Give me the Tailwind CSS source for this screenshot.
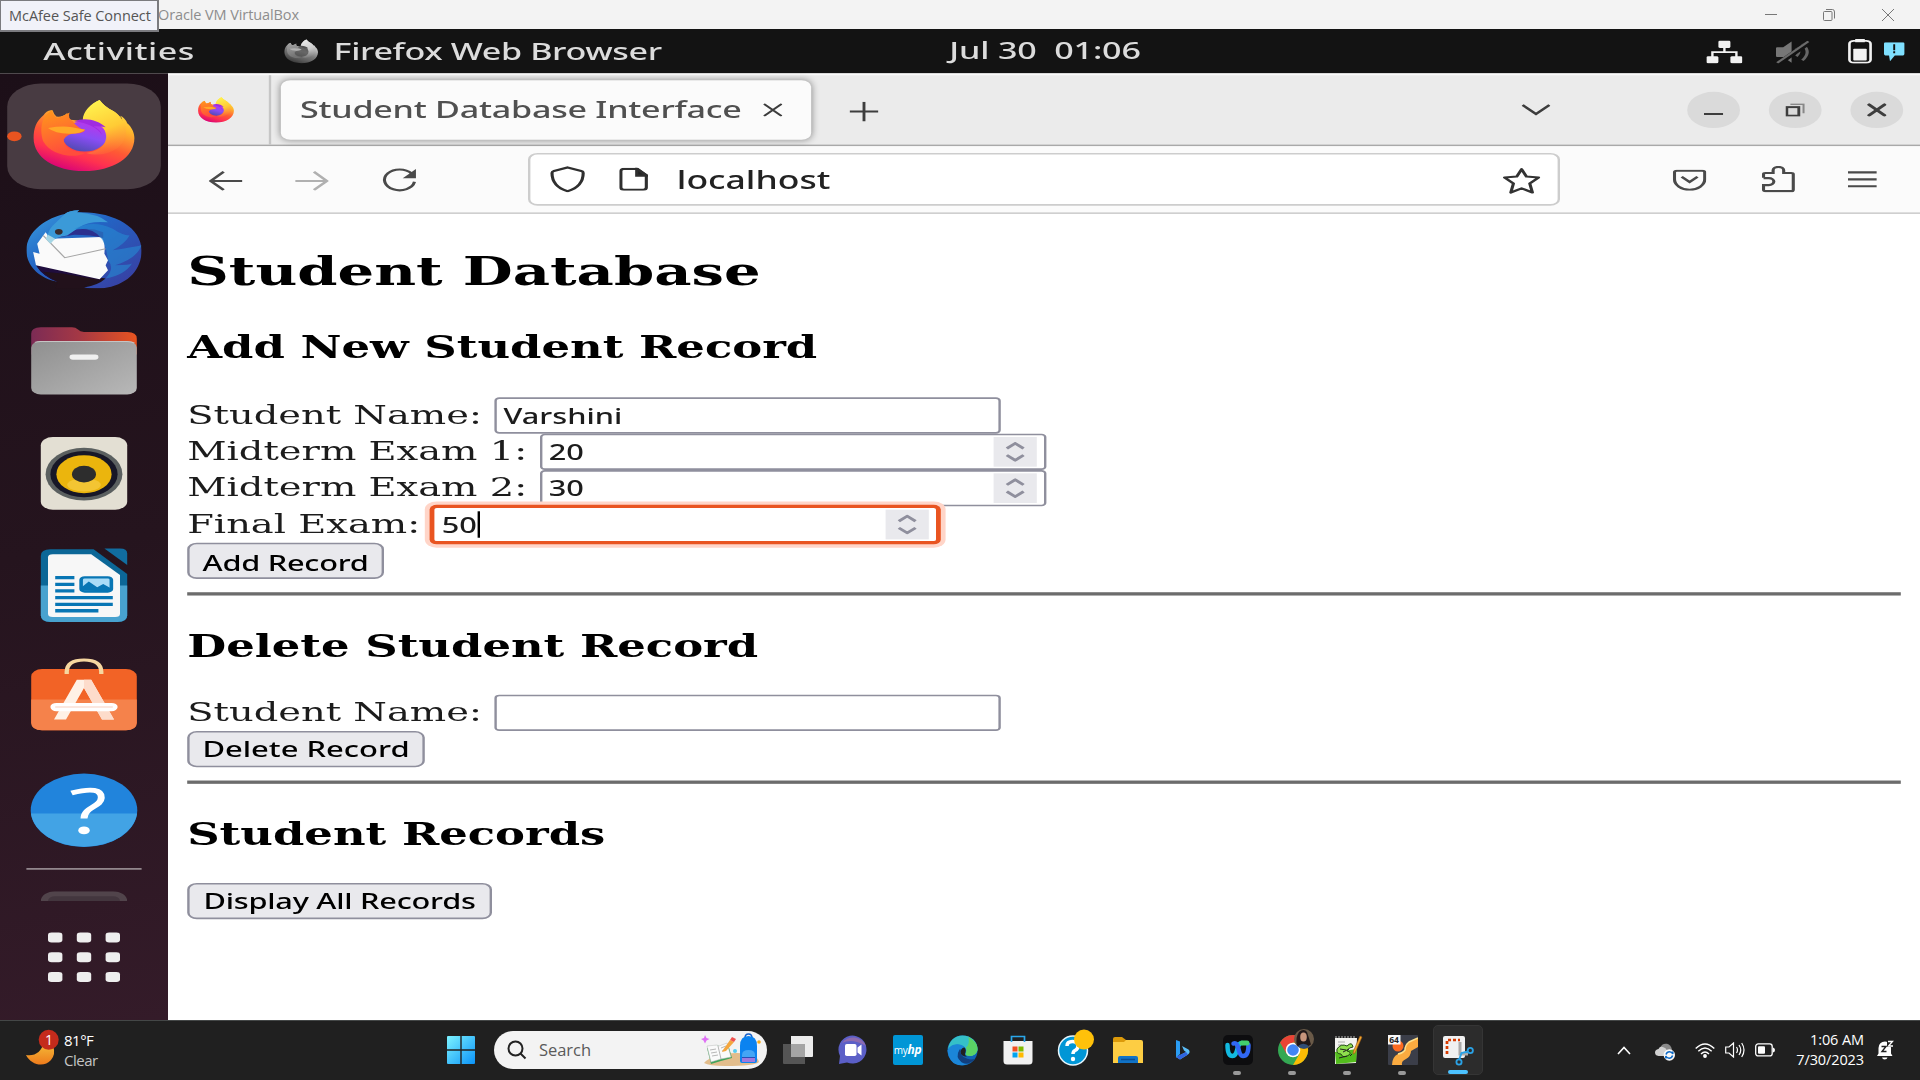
<!DOCTYPE html>
<html lang="en">
<head>
<meta charset="utf-8">
<title>Oracle VM VirtualBox</title>
<script src="https://cdn.jsdelivr.net/npm/@tailwindcss/browser@4"></script>
</head>
<body class="flex h-[1080px] w-[1920px] flex-col overflow-hidden bg-[#202020]">

<!-- gradients and the shared Firefox symbol -->
<svg class="absolute size-0" aria-hidden="true">
  <defs>
    <linearGradient id="ffBody" x1=".75" y1="0" x2=".3" y2="1"><stop offset="0" stop-color="#fff14b"/><stop offset=".3" stop-color="#ffb62d"/><stop offset=".58" stop-color="#ff5a34"/><stop offset=".78" stop-color="#ff3150"/><stop offset="1" stop-color="#d6007a"/></linearGradient>
    <linearGradient id="ffTail" x1=".3" y1="0" x2=".6" y2="1"><stop offset="0" stop-color="#fff44f"/><stop offset=".55" stop-color="#ffcb35"/><stop offset="1" stop-color="#ff7a36" stop-opacity=".2"/></linearGradient>
    <linearGradient id="ffHead" x1="0" y1="0" x2=".3" y2="1"><stop offset="0" stop-color="#ff9a1a"/><stop offset="1" stop-color="#ff4d3c"/></linearGradient>
    <linearGradient id="ffGlobe" x1=".7" y1="0" x2=".3" y2="1"><stop offset="0" stop-color="#bf33e8"/><stop offset=".5" stop-color="#8a4df5"/><stop offset="1" stop-color="#4e4aaf"/></linearGradient>
    <linearGradient id="tb" x1="0" y1="0" x2="1" y2="1"><stop offset="0" stop-color="#3aa0e0"/><stop offset=".4" stop-color="#2364c4"/><stop offset="1" stop-color="#3b3a9e"/></linearGradient>
    <linearGradient id="folderBack" x1="0" y1="0" x2="1" y2="0"><stop offset="0" stop-color="#7c2b55"/><stop offset=".45" stop-color="#a43845"/><stop offset="1" stop-color="#e95420"/></linearGradient>
    <linearGradient id="folderFront" x1="0" y1="0" x2="1" y2="1"><stop offset="0" stop-color="#8f8f8f"/><stop offset="1" stop-color="#b8b8b8"/></linearGradient>
    <linearGradient id="win" x1="0" y1="0" x2="1" y2="1"><stop offset="0" stop-color="#7df3ff"/><stop offset="1" stop-color="#0b93f8"/></linearGradient>
    <linearGradient id="moon" x1="0" y1="0" x2="0" y2="1"><stop offset="0" stop-color="#f5c03a"/><stop offset="1" stop-color="#ee7b1c"/></linearGradient>
  </defs>
  <symbol id="firefox" viewBox="0 0 48 48">
    <path d="M7.2 11C8 9.400 9.500 7.500 11 8.500Q11.500 11 12.500 12Q15 12.500 17 9.800Q17 12.500 18.500 14L25 15C24 10 27 4 30.500 2Q32.500 6 36 8.500C38 10 39.500 13 40 15Q40 12.500 39 11.500Q41 12.500 42 16C44 18.500 45 22 45 25C45 37 36 45 24 45S3 37 3 25C3 19 4 15 7.200 11Z" fill="url(#ffBody)"/>
    <circle cx="24.300" cy="24" r="9.200" fill="url(#ffGlobe)"/>
    <path d="M23.500 14C23.500 9 27 4 30.500 2Q32.500 6 36 8.500C43 15 43 25 38 31C34 35 29 36 25 34C31 33 34 28 33 22C32.500 18 29 14.500 23.500 14Z" fill="url(#ffTail)"/>
    <path d="M20 15C24 12 30 14 33 18.500Q30 17.500 28 18Q31 20 31.500 23Q28 16 20 15Z" fill="#a02be0"/>
    <path d="M10.800 8Q11 11.500 12.800 13Q15 12 18 9.500Q17 13 19.500 15Q20 17 23 19.500Q25 19.800 24 21Q22 22.500 20 22.300Q17 22.500 15.500 26Q16 33 24.500 34C19 38 10 35 7 27C5.500 20 6 12 10.800 8Z" fill="url(#ffHead)"/>
    <path d="M9 19Q15 17.500 19 18.500L24.500 20Q22.500 22.500 18 22.400Q12 22.500 9 19Z" fill="#ffa928"/>
  </symbol>
</svg>

<!-- host window title bar -->
<header class="relative z-10 flex h-[29px] shrink-0 items-start bg-[#f3f3f3] font-['Open_Sans',sans-serif]">
  <div class="flex h-[32px] w-[159px] shrink-0 items-center border-2 border-t border-l border-[#7b7b7f] bg-[#f1f2f9] pt-px pl-2 text-[14.500px] tracking-[-0.05px] whitespace-nowrap text-[#555]"><span>McAfee Safe Connect</span></div>
  <div class="ml-[-1px] text-[14.500px] leading-[29px] tracking-[-0.1px] whitespace-nowrap text-[#8d8d8d]">Oracle VM VirtualBox</div>
  <div class="ml-auto flex h-[29px] items-center pr-[25px] text-[#777]">
    <svg class="h-4 w-[14px]" viewBox="0 0 14 16" fill="none" stroke="currentColor"><path d="M1 7.500H13"/></svg>
    <svg class="ml-11 h-4 w-[14px]" viewBox="0 0 14 16" fill="none" stroke="currentColor"><rect x="1.500" y="4.500" width="8.500" height="9" rx="1"/><path d="M4 2.500H10.500Q12.500 2.500 12.500 5V11.500"/></svg>
    <svg class="ml-[45px] h-4 w-[14px]" viewBox="0 0 14 16" stroke="currentColor"><path d="M1 2L13 14M13 2L1 14"/></svg>
  </div>
</header>

<!-- guest display: 800x600 stretched to fill the window -->
<main class="h-[991px] w-[1920px] shrink-0 overflow-hidden">
<div class="flex h-[600px] w-[800px] origin-top-left scale-x-[2.4] scale-y-[1.6517] flex-col bg-white">

  <!-- GNOME panel -->
  <div class="flex h-[27px] shrink-0 items-center bg-[#131313] pr-[6px] pl-[18px] font-['Noto_Sans',sans-serif] text-[14.200px] font-medium text-[#dcdcdc]">
    <div class="w-[99.500px] tracking-[0.2px] whitespace-nowrap">Activities</div>
    <svg class="size-[15px] grayscale" viewBox="2 1 44 45"><use href="#firefox" width="48" height="48"/></svg>
    <div class="ml-[6.500px] w-[256.500px] tracking-[-0.15px] whitespace-nowrap">Firefox Web Browser</div>
    <div class="w-[315.500px] pb-px tracking-[-0.05px] whitespace-pre">Jul 30  01:06</div>
    <svg class="h-[14px] w-[15px] shrink-0" viewBox="0 0 15 14" fill="#f2f2f2"><rect x="5" width="5" height="4.500" rx=".8"/><rect y="9.500" width="5" height="4.300" rx=".8"/><rect x="10" y="9.500" width="5" height="4.300" rx=".8"/><path d="M2.500 10V7H12.500V10M7.500 4V7" fill="none" stroke="#f2f2f2"/></svg>
    <svg class="ml-[14px] h-[14px] w-[14px] shrink-0" viewBox="0 0 14 14" fill="#777"><path d="M0 4.500Q0 4 .5 4H3L6.500 .5V13.500L3 10H.5Q0 10 0 9.500Z"/><path d="M8.500 4.500Q10.500 7 8.500 9.500M11 2Q15 7 11 12" fill="none" stroke="#666" stroke-width="1.300"/><path d="M.5 14.500L14 .8" stroke="#131313" stroke-width="2.600"/><path d="M.5 13.500L13.500 .5" stroke="#6b6b6b" stroke-width="1.200"/></svg>
    <svg class="mb-px ml-4 h-[15px] w-[10px] shrink-0" viewBox="0 0 10 15"><rect x="3" width="4" height="2" fill="#f2f2f2"/><rect x=".6" y="1.200" width="8.800" height="13.200" rx="1.800" fill="none" stroke="#f2f2f2" stroke-width="1.100"/><rect x="2.200" y="6" width="5.600" height="7" rx=".4" fill="#f2f2f2"/></svg>
    <svg class="mt-px mr-[.5px] ml-auto h-[12px] w-[8.500px] shrink-0" viewBox="0 0 8.500 12"><path d="M.6 0H7.900Q8.500 0 8.500 .8V7Q8.500 8 7.900 8H4.500L2.500 11.500L2.100 8H.6Q0 8 0 7V.8Q0 0 .6 0Z" fill="#7fe0ff"/><path d="M4.250 1.300V4.800M4.250 5.500V6.700" stroke="#111" stroke-width=".8"/></svg>
  </div>

  <div class="flex min-h-0 flex-1">
    <!-- dock -->
    <nav class="flex w-[70px] shrink-0 flex-col items-center gap-1 bg-linear-165 from-[#1c0f18] via-[#25141e] to-[#341b29] pt-[6px]">
      <div class="relative flex size-16 items-center justify-center rounded-[14px] bg-[#483b42]">
        <span class="absolute top-[29px] left-0 size-[6px] rounded-full bg-[#e95420]"></span>
        <svg class="size-12"><use href="#firefox"/></svg>
      </div>
      <div class="flex size-16 items-center justify-center">
        <svg class="size-12" viewBox="0 0 48 48"><path d="M0 25C0 13 9 5 16 3Q18 .8 22 .8L21 2C36 1 48 11 48 25C48 37 42 46 32 48Q27 48.500 24 47.500Q30 46 33 42L4 34Q7 41 13 44C5 42 0 34 0 25Z" fill="url(#tb)"/><path d="M4 34L14 36L32 42Q26 46 13 44Q7 41 4 34Z" fill="#1f0d3d"/><path d="M13 44Q9 41 7 38L15 39L31 43Q24 45 24 47.500L24 49H12Z" fill="#22111b"/><path d="M2.800 26L5.500 27L4.500 21L8 14L10 18L31 17Q33 19 32.500 27L34 31L33 34L34 37L30.500 42.500L4 34Z" fill="#fafafa"/><path d="M7 16L16 29.500L33 24" fill="none" stroke="#a6a6a6" stroke-width=".6"/><path d="M17 14Q25 10 32 14L32 17.500Q27 15.500 20 15.500L10 18Z" fill="#2c2f8e"/><path d="M16 3Q18 .8 22 .8L21 2Q30 3 34 8Q26 7 22 11L17 16Q12 17 10 20L8.500 18Q9 13 11 10Z" fill="#3b9ad8"/><path d="M20 12Q28 6 36 12Q40 16 43 16Q41 21 36 25Q45 23 48 22Q46 30 37 34Q43 34 44 33Q41 40 33 42Q37 36 34 31Q33 20 31 17.500Q28 11 20 12Z" fill="#268bd2" opacity=".6"/><ellipse cx="13.500" cy="13.800" rx="1.600" ry="1.700" fill="#392d2e"/><path d="M9 15.500L8 18L10 21L12 18Z" fill="#a5d6e5"/></svg>
      </div>
      <div class="flex size-16 items-center justify-center">
        <svg class="size-12" viewBox="0 0 48 48"><path d="M2 12V7.500Q2 3.500 6 3.500H19Q20.500 3.500 21.500 5Q22.300 6.500 24 6.500H42Q46 6.500 46 10.500V20H2Z" fill="url(#folderBack)"/><rect x="2" y="12" width="44" height="32.300" rx="4" fill="url(#folderFront)"/><path d="M3.500 12.700Q4.500 12.200 6 12.200H42Q44 12.200 45 13.200" fill="none" stroke="#c5c5c5" stroke-width=".6"/><rect x="18" y="20" width="12" height="3.200" rx="1.400" fill="#f0f0f0"/></svg>
      </div>
      <div class="flex size-16 items-center justify-center">
        <svg class="size-12" viewBox="0 0 48 48"><rect x="6" y="2" width="36" height="44" rx="5" fill="#e3dfd3"/><circle cx="24" cy="24.500" r="16" fill="#5b6060"/><circle cx="24" cy="24.500" r="14" fill="#171727"/><circle cx="24" cy="24.500" r="11.500" fill="#ebb50d"/><ellipse cx="24" cy="31" rx="7" ry="4" fill="#fbd65a" opacity=".5"/><circle cx="24" cy="24.500" r="5" fill="#2d2d2d"/></svg>
      </div>
      <div class="flex size-16 items-center justify-center">
        <svg class="size-12" viewBox="0 0 48 48"><path d="M10 2H28L42 17V42Q42 46 38 46H10Q6 46 6 42V6Q6 2 10 2Z" fill="#0c6797"/><path d="M6 24H42V42Q42 46 38 46H10Q6 46 6 42Z" fill="#48a2cf"/><path d="M32.500 1.500H39Q42 1.500 42 4.500V11.500Z" fill="#116da0"/><path d="M11 5H27L39 17.500V41Q39 43 37 43H11Q9 43 9 41V7Q9 5 11 5Z" fill="#f7f7f7"/><path d="M12 19.200H20M12 23.200H20M12 27.200H20M12 31.300H36M12 35.300H36M12 39.200H30" stroke="#0876b4" stroke-width="2"/><rect x="22.800" y="19" width="12.600" height="8.500" rx="1.500" fill="#aadcf7" stroke="#0876b4" stroke-width="1.500"/><path d="M23 27V25L26 21.500L29.500 25L32 23L35 25.500V27.500Z" fill="#0876b4"/></svg>
      </div>
      <div class="flex size-16 items-center justify-center">
        <svg class="mt-[-1px] size-12 overflow-visible" viewBox="0 0 48 48"><rect x="2" y="6.500" width="44" height="37" rx="4.500" fill="#f26326"/><path d="M2 25H46V39Q46 43.500 41.500 43.500H6.500Q2 43.500 2 39Z" fill="#f5824b"/><path d="M16.800 9.500V8Q17 1 24 1T31.200 8V9.500" fill="none" stroke="#f6d7a0" stroke-width="1.800"/><path d="M21 13H27L36.500 37H31.500L24 18L16.500 37H11.500Z" fill="#fff1e6"/><path d="M24 13H27L36.500 37H31.500L24 18Z" fill="#fddccb"/><rect x="10" y="27" width="28" height="5" rx="2.500" fill="#fff"/><path d="M12 29.500H36" stroke="#f8cfc0" stroke-width=".7"/></svg>
      </div>
      <div class="flex size-16 items-center justify-center">
        <svg class="size-12" viewBox="0 0 48 48"><circle cx="24" cy="24" r="22.200" fill="#2184dc"/><path d="M1.900 26H46.100A22.200 22.200 0 0 1 1.900 26Z" fill="#42a3e5"/><path d="M18.800 13.500Q31.500 9 31.200 16.500C31 22 24 22 24 29" fill="none" stroke="#fff" stroke-width="2.900"/><circle cx="24" cy="36.200" r="2.400" fill="#fff"/></svg>
      </div>
      <div class="mt-[-1px] h-px w-12 bg-[#998f94]"></div>
      <div class="mt-[9px] h-[6px] w-9 overflow-hidden"><div class="h-5 rounded-t-[6px] border-[3px] border-[#51444b] bg-[#43363e]"></div></div>
      <div class="mt-[15px] grid grid-cols-3 gap-[6px]">
        <i class="h-[6px] w-[6px] rounded-[1.500px] bg-[#eee]"></i><i class="h-[6px] w-[6px] rounded-[1.500px] bg-[#eee]"></i><i class="h-[6px] w-[6px] rounded-[1.500px] bg-[#eee]"></i>
        <i class="h-[6px] w-[6px] rounded-[1.500px] bg-[#eee]"></i><i class="h-[6px] w-[6px] rounded-[1.500px] bg-[#eee]"></i><i class="h-[6px] w-[6px] rounded-[1.500px] bg-[#eee]"></i>
        <i class="h-[6px] w-[6px] rounded-[1.500px] bg-[#eee]"></i><i class="h-[6px] w-[6px] rounded-[1.500px] bg-[#eee]"></i><i class="h-[6px] w-[6px] rounded-[1.500px] bg-[#eee]"></i>
      </div>
    </nav>

    <!-- Firefox window -->
    <section class="flex min-w-0 flex-1 flex-col bg-white font-['Noto_Sans',sans-serif]">
      <div class="flex h-11 items-center border-t border-b border-t-[#fafafa] border-b-[#a9a9a9] bg-[#ebebeb] text-[#3d3d3d]">
        <div class="flex h-full w-[43px] items-center border-r border-[#c6c6c6] pl-3"><svg class="size-4" viewBox="2 1 44 45"><use href="#firefox" width="48" height="48"/></svg></div>
        <div class="ml-1 flex h-9 w-[221px] items-center justify-between rounded-[4px] bg-[#fbfbfb] pr-3 pl-2 shadow-[0_0_4px_rgba(0,0,0,0.4)]">
          <span class="text-[14.200px] font-medium tracking-[-0.1px] whitespace-nowrap text-[#505050]">Student Database Interface</span>
          <svg class="size-2" viewBox="0 0 8 8" stroke="currentColor"><path d="M.3 .3L7.700 7.700M7.700 .3L.3 7.700"/></svg>
        </div>
        <svg class="mt-px ml-[15.500px] size-3" viewBox="0 0 12 12" stroke="currentColor" stroke-width="1.200"><path d="M6 0V12M0 6H12"/></svg>
        <svg class="ml-[268.500px] h-2 w-3" viewBox="0 0 12 8" fill="none" stroke="currentColor" stroke-width="1.300"><path d="M.4 1L6 6.500L11.600 1"/></svg>
        <div class="ml-auto flex gap-3 pr-[7px]">
          <div class="flex size-[22px] items-center justify-center rounded-full bg-[#dadada]"><svg class="size-2" viewBox="0 0 8 8" stroke="currentColor" stroke-width="1.200"><path d="M0 6.500H8"/></svg></div>
          <div class="flex size-[22px] items-center justify-center rounded-full bg-[#dadada]"><svg class="size-2" viewBox="0 0 8 8" fill="none" stroke="currentColor"><rect x=".5" y="2.300" width="5" height="5.200" stroke-width="1.200"/><path d="M2 .5H7.500V6" stroke="#888" stroke-width=".9"/></svg></div>
          <div class="flex size-[22px] items-center justify-center rounded-full bg-[#dadada]"><svg class="size-2" viewBox="0 0 8 8" stroke="currentColor" stroke-width="1.500"><path d="M.3 .3L7.700 7.700M7.700 .3L.3 7.700"/></svg></div>
        </div>
      </div>

      <div class="flex h-[41px] items-center border-b border-[#cfcfcf] bg-[#fbfbfb] pr-[18px] pl-[17px] text-[#4a4a4a]">
        <svg class="mt-px h-3 w-[14px]" viewBox="0 0 14 12" fill="none" stroke="currentColor" stroke-width="1.300"><path d="M14 6H1M6.200 .5L.8 6L6.200 11.500"/></svg>
        <svg class="mt-px ml-[22px] h-3 w-[14px] text-[#b0b0b0]" viewBox="0 0 14 12" fill="none" stroke="currentColor" stroke-width="1.300"><path d="M0 6H13M7.800 .5L13.200 6L7.800 11.500"/></svg>
        <svg class="mt-px ml-[21.500px] h-[15px] w-[15px]" viewBox="0 0 15 15" fill="none" stroke="currentColor" stroke-width="1.300"><path d="M12.500 3.500A6.300 6.300 0 1 0 13.700 8.500"/><path d="M14.300 .8V6.300H8.800Z" fill="currentColor" stroke="none"/></svg>
        <div class="ml-[46.500px] flex h-8 w-[430px] items-center rounded-[4px] border border-[#cdcdcd] bg-white pr-[7px] pl-[7.500px] text-[#222]">
          <svg class="h-4 w-[15px]" viewBox="0 0 15 16" fill="none" stroke="#2f2f2f" stroke-width="1.300"><path d="M7.500 .8L13.200 3Q14 3.300 14 4.200C14 10 11.500 13.500 7.500 15.200C3.500 13.500 1 10 1 4.200Q1 3.300 1.800 3Z"/></svg>
          <svg class="ml-[14.500px] h-[14px] w-3" viewBox="0 0 12 14" fill="none" stroke="#2f2f2f" stroke-width="1.300"><path d="M7.500 .7H2Q.7 .7 .7 2V12Q.7 13.300 2 13.300H10Q11.300 13.300 11.300 12V4.500Z"/><path d="M7.300 .5V4.800H11.500Z" fill="#222"/></svg>
          <span class="mt-px ml-3 text-[14.800px] font-medium whitespace-nowrap">localhost</span>
          <svg class="mt-px ml-auto size-4" viewBox="0 0 16 16" fill="none" stroke="#333" stroke-width="1.300" stroke-linejoin="round"><path d="M8 .9L10 5.300L15.100 5.900L11.400 9.500L12.500 15L8 12.500L3.500 15L4.600 9.500L.9 5.900L6 5.300Z"/></svg>
        </div>
        <svg class="ml-[47px] h-[13px] w-[14px]" viewBox="0 0 14 13" fill="none" stroke="currentColor" stroke-width="1.300"><path d="M1.700 .8H12.300Q13.300 .8 13.300 1.800V6A6.300 6.300 0 0 1 .7 6V1.800Q.7 .8 1.700 .8Z"/><path d="M3.700 4.500L7 7.700L10.300 4.500"/></svg>
        <svg class="ml-[22.500px] h-4 w-[14px]" viewBox="0 0 14 16" fill="none" stroke="currentColor" stroke-width="1.300"><path d="M.8 7V5Q.8 4.200 1.600 4.200H4.800V2.500A2.200 2 0 0 1 9.200 2.500V4.200H12.300Q13.200 4.200 13.200 5V14.300Q13.200 15.200 12.300 15.200H1.600Q.8 15.200 .8 14.300V11.500H3A2 2 0 0 0 3 7.300H.8"/></svg>
        <svg class="ml-auto h-3 w-3" viewBox="0 0 12 12" stroke="currentColor" stroke-width="1.300"><path d="M0 1.800H12M0 6H12M0 10.200H12"/></svg>
      </div>

      <!-- web page -->
      <article class="flex flex-col items-start px-2 font-['DejaVu_Serif',serif] text-[16px] leading-[19px] text-black">
        <h2 class="mt-[21px] text-[24px] leading-7 font-bold whitespace-nowrap">Student Database</h2>
        <h3 class="mt-5 text-[18.720px] leading-[22px] font-bold whitespace-nowrap">Add New Student Record</h3>
        <div class="mt-5 flex h-[22px] items-center gap-[5px] text-[#1c1c1c]"><span class="pb-px whitespace-nowrap">Student Name:</span>
          <div class="flex h-[22px] w-[211px] items-center rounded-[2px] border border-[#8f8f9d] bg-white pl-[3px] font-['Noto_Sans',sans-serif] text-[12.800px] font-medium">Varshini</div></div>
        <div class="flex h-[22px] items-center gap-[5px] text-[#1c1c1c]"><span class="pb-px whitespace-nowrap">Midterm Exam 1:</span>
          <div class="flex h-[22px] w-[211px] items-center justify-between rounded-[2px] border border-[#8f8f9d] bg-white pr-[3px] pl-[3px] font-['Noto_Sans',sans-serif] text-[12.800px] font-medium">20
            <div class="flex h-[18px] w-[18px] items-center justify-center bg-[#e9e9ed]"><svg class="h-3 w-2" viewBox="0 0 8 12" fill="none" stroke="#8f8f9d" stroke-width="1.500"><path d="M.5 4L4 .9L7.500 4M.5 8L4 11.100L7.500 8"/></svg></div></div></div>
        <div class="flex h-[22px] items-center gap-[5px] text-[#1c1c1c]"><span class="pb-px whitespace-nowrap">Midterm Exam 2:</span>
          <div class="flex h-[22px] w-[211px] items-center justify-between rounded-[2px] border border-[#8f8f9d] bg-white pr-[3px] pl-[3px] font-['Noto_Sans',sans-serif] text-[12.800px] font-medium">30
            <div class="flex h-[18px] w-[18px] items-center justify-center bg-[#e9e9ed]"><svg class="h-3 w-2" viewBox="0 0 8 12" fill="none" stroke="#8f8f9d" stroke-width="1.500"><path d="M.5 4L4 .9L7.500 4M.5 8L4 11.100L7.500 8"/></svg></div></div></div>
        <div class="flex h-[22px] items-center gap-[5px] text-[#1c1c1c]"><span class="pb-px whitespace-nowrap">Final Exam:</span>
          <div class="flex h-[22px] w-[211px] items-center justify-between rounded-[2px] border border-[#e95420] bg-white pr-[3px] pl-[3px] font-['Noto_Sans',sans-serif] text-[12.800px] font-medium shadow-[0_0_0_1px_#e95420,0_0_0_3px_#ffd5c8]"><span class="flex items-center">50<i class="h-4 w-px bg-black"></i></span>
            <div class="flex h-[18px] w-[18px] items-center justify-center bg-[#e9e9ed]"><svg class="h-3 w-2" viewBox="0 0 8 12" fill="none" stroke="#8f8f9d" stroke-width="1.500"><path d="M.5 4L4 .9L7.500 4M.5 8L4 11.100L7.500 8"/></svg></div></div></div>
        <button class="h-[22px] w-[82px] rounded-[4px] border border-[#8f8f9d] bg-[#e9e9ed] pt-[.5px] font-['Noto_Sans',sans-serif] text-[12.800px] leading-5 font-medium tracking-[-0.1px] whitespace-nowrap">Add Record</button>
        <div class="mt-2 h-[2px] w-full bg-[#6c6c6c]"></div>
        <h3 class="mt-[18.500px] text-[18.720px] leading-[22px] font-bold whitespace-nowrap">Delete Student Record</h3>
        <div class="mt-[19.300px] flex h-[22px] items-center gap-[5px] text-[#1c1c1c]"><span class="pb-px whitespace-nowrap">Student Name:</span>
          <div class="h-[22px] w-[211px] rounded-[2px] border border-[#8f8f9d] bg-white"></div></div>
        <button class="h-[22px] w-[99px] rounded-[4px] border border-[#8f8f9d] bg-[#e9e9ed] pt-[.5px] font-['Noto_Sans',sans-serif] text-[12.900px] leading-5 font-medium whitespace-nowrap">Delete Record</button>
        <div class="mt-2 h-[2px] w-full bg-[#6c6c6c]"></div>
        <h3 class="mt-[19px] text-[18.720px] leading-[22px] font-bold whitespace-nowrap">Student Records</h3>
        <button class="mt-[19.200px] h-[22px] w-[127px] rounded-[4px] border border-[#8f8f9d] bg-[#e9e9ed] pt-[.5px] font-['Noto_Sans',sans-serif] text-[12.800px] leading-5 font-medium tracking-[-0.1px] whitespace-nowrap">Display All Records</button>
      </article>
    </section>
  </div>
</div>
</main>

<!-- Windows taskbar -->
<footer class="flex h-[60px] shrink-0 items-center border-t border-[#444747] bg-[#202020] pb-px font-['Open_Sans',sans-serif] text-white">
  <svg class="ml-6 h-11 w-9 shrink-0 overflow-visible" viewBox="24 1026 36 44"><path d="M26 1053Q40 1055 44 1040L53 1044Q56 1052 51 1058C44 1066 31 1063 26 1053Z" fill="url(#moon)"/><circle cx="48.700" cy="1037.700" r="10" fill="#c42b1c"/><text x="49" y="1043" text-anchor="middle" font-family="Open Sans" font-size="14" fill="#fff">1</text></svg>
  <div class="ml-1 w-[382px] pb-px text-[15px] leading-5 tracking-[-0.5px]"><div>81°F</div><div class="text-[#c4c4c4]">Clear</div></div>
  <svg class="size-[30px] shrink-0" viewBox="0 0 30 30" fill="url(#win)"><path d="M1 2Q1 1 2 1H14.300V14.300H1ZM15.700 1H28Q29 1 29 2V14.300H15.700ZM1 15.700H14.300V29H2Q1 29 1 28ZM15.700 15.700H29V28Q29 29 28 29H15.700Z"/></svg>
  <div class="ml-[18px] flex h-[38px] w-[273px] shrink-0 items-center rounded-full bg-[#f3f3f3] pl-[13px] text-[#5a5a5a]">
    <svg class="size-5" viewBox="0 0 20 20" fill="none" stroke="#222" stroke-width="2"><circle cx="8.500" cy="8.500" r="7"/><path d="M13.500 13.500L18.500 18.500"/></svg>
    <span class="ml-3 text-[16.500px] tracking-[-0.05px]">Search</span>
    <svg class="mr-[4px] ml-auto h-[34px] w-[62px]" viewBox="0 0 62 34"><path d="M3 30Q12 20 36 20Q56 20 58 29Q54 33 24 33Q8 33 3 30Z" fill="#e2bd8c"/><path d="M6 15L17 12L18 14L27 11L31 25L20 28L10 31Z" fill="#3fa45a"/><path d="M6 13L16 12L18 13L26 10L30 24L20 26L10 29Z" fill="#fafafa" stroke="#bbb" stroke-width=".5"/><path d="M17 13L20 26M9 17L15 16M10 20L16 19M11 23L17 22M20 15L25 13M21 18L26 16" stroke="#999" stroke-width=".7"/><path d="M22 17L29 7L33 9L25 18L21 19Z" fill="#f4a63e"/><path d="M29 7L31 4L35 6L33 9Z" fill="#f0514e"/><path d="M4 2L5.500 5L8.500 6L5.500 7.500L4 10.500L2.500 7.500L0 6L3 5Z" fill="#df6ff5"/><circle cx="34" cy="18" r="2" fill="#58cdf0"/><circle cx="58" cy="9" r="1.800" fill="#f9ab19"/><path d="M44 5Q44 1 47.500 1T51 5" fill="none" stroke="#145fc9" stroke-width="1.500"/><path d="M39 13Q39 3 47.500 3T56 13V28Q56 30 54 30H41Q39 30 39 28Z" fill="#0b83f0"/><path d="M41 24H54V28H41Z" fill="#2850b8"/><path d="M41 22Q41 17 47.500 17T54 22V24H41Z" fill="#43a5f5"/><path d="M41 25H54V29H41Z" fill="#9d79df"/></svg>
  </div>

  <div class="ml-[3px] flex shrink-0 items-center">
    <div class="flex h-[50px] w-[55px] items-center justify-center"><svg class="size-8" viewBox="0 0 32 32"><path d="M9 2H30Q31 2 31 3V22Q31 23 30 23H9Z" fill="#ececec"/><path d="M1 10H23V30H2Q1 30 1 29Z" fill="#555"/><path d="M9 10H23V23H9Z" fill="#a5a5a5"/></svg></div>
    <div class="flex h-[50px] w-[55px] items-center justify-center"><svg class="size-8" viewBox="0 0 32 32"><path d="M2 30L3 22A14 14 0 1 1 10 28.500Z" fill="#5b5fc7"/><path d="M5 9A14 14 0 0 1 29 12Q15 4 5 9Z" fill="#8d6bb0"/><rect x="8" y="10" width="11.500" height="12" rx="1.800" fill="#fff"/><path d="M20.500 13.500L24.500 10.500V21.500L20.500 18.500Z" fill="#fff"/></svg></div>
    <div class="flex h-[50px] w-[55px] items-center justify-center"><div class="flex size-[30px] items-center justify-center rounded-[2px] bg-[#0096d6] text-[10px] tracking-[-0.3px]"><span>my<i class="text-[12px] font-bold">hp</i></span></div></div>
    <div class="flex h-[50px] w-[55px] items-center justify-center"><svg class="size-[31px]" viewBox="0 0 32 32"><circle cx="16" cy="16" r="15.500" fill="#0f64b4"/><path d="M1 15C2 6 8 .5 16 .5C25 .5 32 7 31.500 15C31 21 24 23 20 21Q18.500 20 19.500 18.500C21.500 14 17 10 11 10Q4 10 1 15Z" fill="#35c0c8"/><path d="M22 2C28 5 32 10 31.500 15C31 21 24 23 20 21Q18.500 20 19.500 18.500Q21 16 19.500 13Q24 9 22 2Z" fill="#5bd365"/><path d="M.5 16Q4 9 11 9.500C18 10 20 14 19.300 18.500Q17 13 13 16C9 22 14 30 22 30Q10 34 4 26Q1 22 .5 16Z" fill="#1b86d8"/><path d="M13 15Q8 23 15 28Q22 32 29 24.500Q25 26 21 24.500Q12 22 14 14.500Z" fill="#123f7d"/><path d="M18 13Q20.500 16 18.500 19Q18 21 20.500 22.500Q14 22 14 17Q15 13 18 13Z" fill="#202020"/></svg></div>
    <div class="flex h-[50px] w-[55px] items-center justify-center"><svg class="size-8" viewBox="0 0 32 32"><path d="M1.500 7H30.500V27Q30.500 30.500 27 30.500H5Q1.500 30.500 1.500 27Z" fill="#f1f1f1"/><path d="M9.500 8V2.500H22.500V8" fill="none" stroke="#2aa7ea" stroke-width="1.700"/><path d="M10.500 12.500H15.500V17.500H10.500Z" fill="#f25022"/><path d="M16.500 12.500H21.500V17.500H16.500Z" fill="#7fba00"/><path d="M10.500 18.500H15.500V23.500H10.500Z" fill="#00a4ef"/><path d="M16.500 18.500H21.500V23.500H16.500Z" fill="#ffb900"/></svg></div>
    <div class="flex h-[50px] w-[55px] items-center justify-center"><svg class="size-9 overflow-visible" viewBox="0 0 36 36"><circle cx="18" cy="18.500" r="14.500" fill="#0096d6" stroke="#e7f6fd" stroke-width="1.500"/><path d="M12 14Q12 9.500 17.500 9.500T23 14Q23 17 20 18.500Q18 19.500 18 22" fill="none" stroke="#fff" stroke-width="3.500"/><circle cx="18" cy="27" r="2.200" fill="#fff"/><circle cx="29" cy="7.500" r="10" fill="#ffc10a"/></svg></div>
    <div class="flex h-[50px] w-[55px] items-center justify-center"><svg class="size-8" viewBox="0 0 32 32"><path d="M1 12V5Q1 3 3 3H10L14 6V10Z" fill="#dc9a0a"/><path d="M1 8H12L14 6H29Q31 6 31 8V29H1Z" fill="#fdcd43"/><path d="M6 29V24Q6 22 8 22H24Q26 22 26 24V29Z" fill="#1173c7"/><path d="M9 25.500H23" stroke="#0a4d92" stroke-width="1.500"/></svg></div>
    <div class="flex h-[50px] w-[55px] items-center justify-center"><svg class="h-5 w-4" viewBox="0 0 16 20"><path d="M1 0L5 1.500V14L1 17.500Z" fill="#2a9df4"/><path d="M1 17L5 19.500L13 14.500Q16 12 13.500 9.500L7 6L9 10.500L11 12Z" fill="#5abdf7"/><path d="M1 17L11 12L13 14.500L5 19.500Z" fill="#2f64e0"/></svg></div>
    <div class="relative flex h-[50px] w-[55px] items-center justify-center"><svg class="size-[30px]" viewBox="0 0 30 30"><rect width="30" height="30" rx="5" fill="#0d0d0f"/><path d="M4.500 10Q4.500 21 9.500 21Q13 21 14.500 13.500Q16 7.500 19 8" fill="none" stroke="#12b9e0" stroke-width="4.500" stroke-linecap="round"/><path d="M10.500 8.500Q14 7 15.500 14Q17 21 20 21Q25.500 21 25.500 10" fill="none" stroke="#3168f4" stroke-width="4.500" stroke-linecap="round"/><path d="M19 8H24" stroke="#42cf6d" stroke-width="5" stroke-linecap="round"/></svg><i class="absolute bottom-0 left-[23px] h-1 w-2 rounded-full bg-[#999]"></i></div>
    <div class="relative flex h-[50px] w-[55px] items-center justify-center"><svg class="size-[30px] overflow-visible" viewBox="0 0 30 30"><circle cx="15" cy="15" r="15" fill="#34a853"/><path d="M2 7.500A15 15 0 0 1 28 7.500H15L8.500 18.700Z" fill="#ea4335"/><path d="M28 7.500A15 15 0 0 1 15 30L21.500 18.700L15 7.500Z" fill="#fbbc05"/><circle cx="15" cy="15" r="7.300" fill="#fff"/><circle cx="15" cy="15" r="5.800" fill="#4285f4"/><circle cx="26" cy="4" r="10" fill="#6a5a48"/><path d="M19 10.500Q17 3 21 -3Q26 -7 29 -3L33 9.500Q26 15 19 10.500Z" fill="#211819"/><ellipse cx="25.500" cy="2" rx="3.300" ry="4.500" fill="#c8957c"/><path d="M19.500 11.500Q25 6 31.500 11.500Q26 15.500 19.500 11.500Z" fill="#304d76"/></svg><i class="absolute bottom-0 left-[23px] h-1 w-2 rounded-full bg-[#999]"></i></div>
    <div class="relative flex h-[50px] w-[55px] items-center justify-center"><svg class="size-8" viewBox="0 0 32 32"><path d="M3 4H25L24 29L3 30Z" fill="#f4f4f0"/><path d="M3 18L25 15L24 28L4 30Z" fill="#53bd1d"/><path d="M4 4V2M7 4V2M10 4V2M13 4V2M16 4V2M19 4V2M22 4V2" stroke="#bbb"/><path d="M6 8H13M6 11H10" stroke="#aaa"/><path d="M5 15Q9 9 15 12Q20 7 21 13Q17 13 15 17Q20 18 17 21Q11 25 9 20Q4 20 5 15Z" fill="#8fdf4e" stroke="#234a14"/><path d="M8 15L14 16M11 18L17 15M7 24L15 22M18 22L20 20" stroke="#222"/><path d="M28 2L30 3L23 19L21 20L21.500 17Z" fill="#f2a82d" stroke="#9b5818" stroke-width=".6"/></svg><i class="absolute bottom-0 left-[23px] h-1 w-2 rounded-full bg-[#999]"></i></div>
    <div class="relative flex h-[50px] w-[55px] items-center justify-center"><svg class="size-[30px]" viewBox="0 0 30 30"><rect width="30" height="30" rx="1" fill="#3b3e49"/><path d="M30 3L21 7Q17 10 17 15Q15 18 10 19Q4 22 4 30H14Q13 26 18 24Q23 21 23 16L30 12Z" fill="#fbab40"/><path d="M30 3L21 7Q17 10 17 15Q15 18 10 19" fill="none" stroke="#ffe18b" stroke-width="1.500"/><circle cx="10" cy="11" r="5.500" fill="#fb6a20"/><rect width="12.500" height="9.500" fill="#f7f7f7"/><text x="6" y="8" text-anchor="middle" font-family="Open Sans" font-size="8.500" font-weight="700" fill="#222">64</text></svg><i class="absolute bottom-0 left-[23px] h-1 w-2 rounded-full bg-[#999]"></i></div>
    <div class="relative ml-[3px] flex h-[50px] w-[50px] items-center justify-center rounded-[5px] border border-[#353535] bg-[#2c2c2c]"><svg class="size-8" viewBox="0 0 32 32"><rect x="1" y="2" width="22" height="22" rx="2" fill="#f1f1f1"/><path d="M5 20V6H18" fill="none" stroke="#d83b01" stroke-width="2.700" stroke-dasharray="3 2"/><path d="M18 8V20H26" fill="none" stroke="#aaa" stroke-width="3"/><path d="M17 26L19.500 19L26 17.500" fill="none" stroke="#2aa2e6" stroke-width="2"/><circle cx="28.300" cy="16.500" r="2.600" fill="none" stroke="#2aa2e6" stroke-width="1.800"/><circle cx="17" cy="28" r="2.600" fill="none" stroke="#2aa2e6" stroke-width="1.800"/></svg><i class="absolute bottom-0 left-[14px] h-1 w-5 rounded-full bg-[#4cc2ff]"></i></div>
  </div>

  <div class="ml-auto flex shrink-0 items-center pr-[26px]">
    <svg class="h-[9px] w-[14px]" viewBox="0 0 14 9" fill="none" stroke="#fff" stroke-width="1.600"><path d="M1 8L7 1.500L13 8"/></svg>
    <svg class="mt-1 ml-[24px] h-[18px] w-5" viewBox="0 0 20 18"><path d="M5 5Q7 0 12 .8Q16 1.500 17 7L14 12H5Z" fill="#8a8a8a"/><path d="M3.500 13Q0 12.500 0 9.500T3.500 6Q5 2.500 9 4.500Q13 6 13 13Z" fill="#d1d1d1"/><circle cx="14.300" cy="12" r="5.700" fill="#f8f8f8"/><path d="M11 11.500Q12 8.800 14.500 8.800T17.800 11V8.500M17.600 12.500Q16.600 15.200 14.100 15.200T10.800 13V15.500" fill="none" stroke="#0b69c7" stroke-width="1.500"/></svg>
    <svg class="ml-5 h-[15px] w-5" viewBox="0 0 20 15" fill="none" stroke="#fff" stroke-width="1.400"><path d="M.7 5.500Q10 -3.500 19.300 5.500M3.300 8.300Q10 1.700 16.700 8.300M6 11Q10 7 14 11"/><circle cx="10" cy="13" r="1.200" fill="#fff"/></svg>
    <svg class="ml-[10px] h-4 w-5" viewBox="0 0 20 16" fill="none" stroke="#fff" stroke-width="1.200"><path d="M.7 5H4L8.500 1V15L4 11H.7ZM11.500 5Q13.500 8 11.500 11M14 3Q17.500 8 14 13M16.700 1Q21.300 8 16.700 15"/></svg>
    <svg class="ml-[10px] h-[14px] w-5" viewBox="0 0 20 14"><rect x=".7" y=".9" width="16.500" height="12" rx="2.500" fill="none" stroke="#fff" stroke-width="1.300"/><rect x="3" y="3.200" width="7" height="7.500" rx="1" fill="#fff"/><path d="M18 4.500Q20 5 20 7T18 9.500Z" fill="#fff"/></svg>
    <div class="w-[89px] pb-px text-right text-[14.500px] leading-5 tracking-[-0.1px] whitespace-nowrap"><div>1:06 AM</div><div>7/30/2023</div></div>
    <svg class="ml-3 h-5 w-[18px]" viewBox="0 0 18 20"><path d="M1 16L2.500 13.500V8Q3 1.500 9 1.500Q15 2 15 8V13.500L16.500 16Z" fill="#fff"/><path d="M6 17.500H11.500Q11 19.500 8.700 19.500T6 17.500Z" fill="#fff"/><path d="M11 0H18V7H11Z" fill="#202020"/><path d="M12 1.500H16.500L12.500 6H17" fill="none" stroke="#fff" stroke-width="1.300"/><path d="M5.500 6.500H10L6 11.500H10.500" fill="none" stroke="#202020" stroke-width="1.400"/></svg>
  </div>
</footer>
</body>
</html>
